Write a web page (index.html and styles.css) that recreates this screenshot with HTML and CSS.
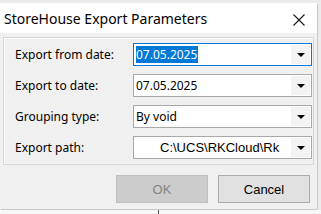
FILE: index.html
```html
<!DOCTYPE html>
<html>
<head>
<meta charset="utf-8">
<link rel="stylesheet" href="styles.css">
</head>
<body>
<div class="screen">
  <div class="window">
    <div class="titlebar">
      <span class="title">StoreHouse Export Parameters</span>
      <svg class="close" width="12" height="12" viewBox="0 0 12 12"><path d="M0.5 0.5 L11.5 11.5 M11.5 0.5 L0.5 11.5" stroke="#1a1a1a" stroke-width="1.1" fill="none"/></svg>
    </div>
    <div class="body">
      <div class="panel">
        <div class="label">Export from date:</div>
        <div class="combo focused">
          <span class="value"><span class="sel">07.05.2025</span></span>
          <span class="drop"><span class="arrow"></span></span>
        </div>
        <div class="label">Export to date:</div>
        <div class="combo">
          <span class="value">07.05.2025</span>
          <span class="drop"><span class="arrow"></span></span>
        </div>
        <div class="label">Grouping type:</div>
        <div class="combo">
          <span class="value">By void</span>
          <span class="drop"><span class="arrow"></span></span>
        </div>
        <div class="label">Export path:</div>
        <div class="combo">
          <span class="value path">C:\UCS\RKCloud\Rk</span>
          <span class="drop"><span class="arrow"></span></span>
        </div>
      </div>
      <div class="buttons">
        <div class="btn disabled">OK</div>
        <div class="btn">Cancel</div>
      </div>
    </div>
  </div>
  <div class="below"><span class="tick"></span></div>
</div>
</body>
</html>
```

FILE: styles.css
```css
html, body {
  margin: 0;
  padding: 0;
}
body {
  width: 321px;
  height: 214px;
  overflow: hidden;
  font-family: "Noto Sans", sans-serif;
}
.screen {
  width: 321px;
  height: 214px;
  background: #ebebeb;
  padding-top: 3px;
  box-sizing: border-box;
}
.window {
  width: 317px;
  height: 206px;
  display: flex;
  flex-direction: column;
  background: #f0f0f0;
  box-shadow: 1px 1px 0 #c8c8c8;
}
.below {
  height: 5px;
  margin-top: 1px;
  background: #f7f7f7;
  display: flex;
  padding-left: 158px;
}
.tick {
  width: 1px;
  background: #555;
}
.titlebar {
  height: 30px;
  background: #ffffff;
  display: flex;
  align-items: center;
  justify-content: space-between;
  padding: 0 12px 0 4px;
  flex: none;
}
.title {
  font-size: 14px;
  color: #000;
  padding-top: 1px;
}
.close {
  margin-top: 3px;
}
.body {
  flex: 1;
  display: flex;
  flex-direction: column;
  padding: 4px 3px 0 3px;
}
.panel {
  border: 1px solid #d6d6d6;
  box-shadow: inset 1px 1px 0 #ffffff;
  display: grid;
  grid-template-columns: 118px 179px;
  grid-auto-rows: 23px;
  row-gap: 8px;
  padding: 5px 1px 5px 11px;
  align-items: center;
}
.label {
  font-size: 12px;
  color: #000;
}
.combo {
  height: 23px;
  box-sizing: border-box;
  border: 1px solid #a8a8a8;
  background: #fff;
  display: flex;
  align-items: center;
}
.combo.focused {
  border-color: #0078d7;
}
.value {
  flex: 1;
  font-size: 12px;
  padding-left: 2px;
  white-space: nowrap;
  overflow: hidden;
  color: #000;
}
.sel {
  display: inline-block;
  background: #0078d7;
  color: #fff;
  padding: 0 1px 0 0;
  line-height: 17px;
}
.path {
  font-family: "Liberation Sans", sans-serif;
  font-size: 13px;
  padding-left: 26px;
}
.drop {
  width: 19px;
  height: 19px;
  margin-right: 1px;
  background: #f3f3f3;
  display: flex;
  align-items: center;
  justify-content: center;
}
.arrow {
  width: 0;
  height: 0;
  border-left: 4px solid transparent;
  border-right: 4px solid transparent;
  border-top: 4px solid #000;
}
.buttons {
  display: flex;
  justify-content: flex-end;
  gap: 10px;
  padding: 10px 4px 0 0;
}
.btn {
  width: 92px;
  height: 28px;
  box-sizing: border-box;
  border: 1px solid #adadad;
  background: #e1e1e1;
  display: flex;
  align-items: center;
  justify-content: center;
  font-family: "Liberation Sans", sans-serif;
  font-size: 13px;
  color: #000;
}
.btn.disabled {
  background: #cccccc;
  border-color: #bfbfbf;
  color: #838383;
}
```
